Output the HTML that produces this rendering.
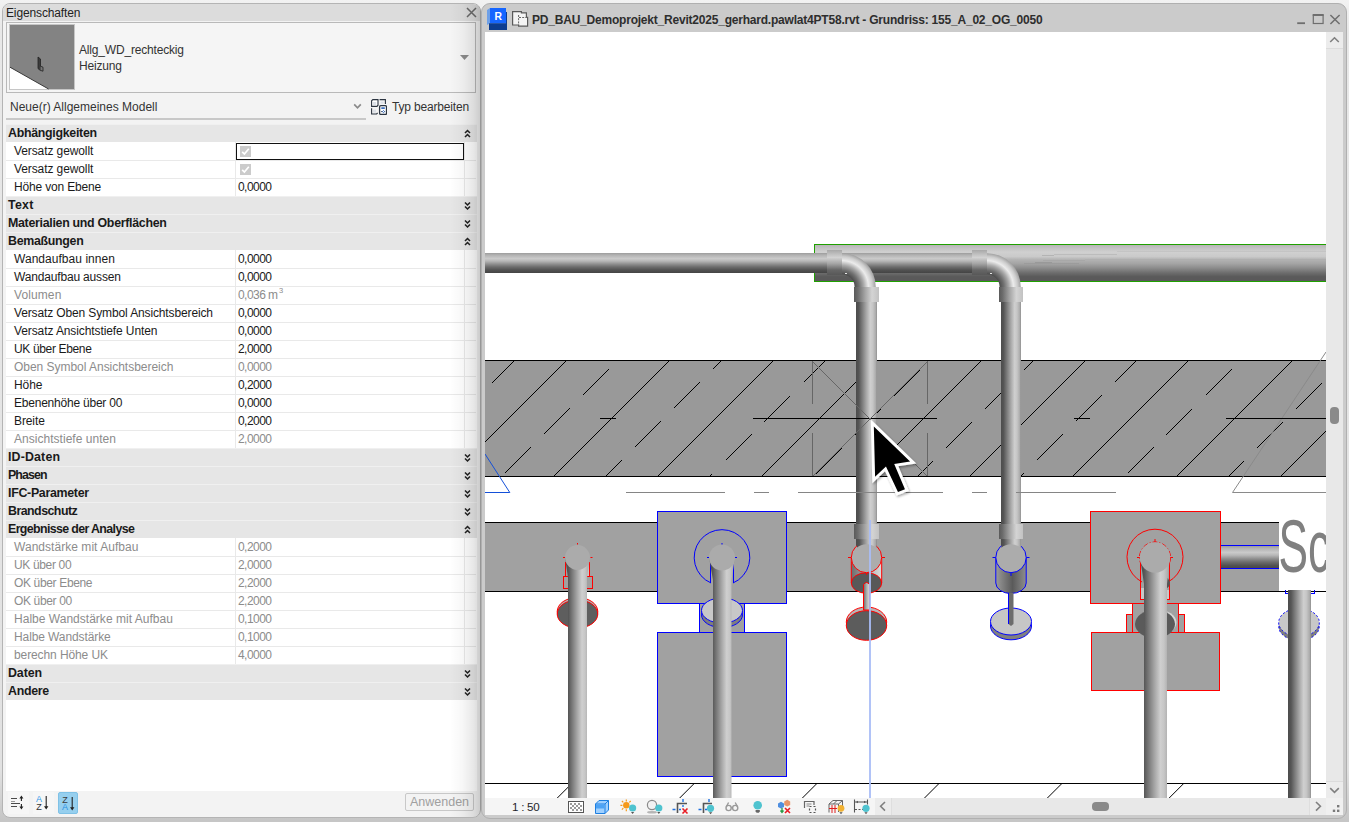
<!DOCTYPE html>
<html lang="de"><head><meta charset="utf-8"><title>Eigenschaften</title>
<style>
*{box-sizing:border-box;margin:0;padding:0}
html,body{width:1349px;height:822px;overflow:hidden}
body{position:relative;background:linear-gradient(#f2f2f2 0,#e8e8e8 30px,#e1e1e1 770px,#c6c6c6 819px);font-family:"Liberation Sans",sans-serif;font-size:12px;color:#1a1a1a}
.abs{position:absolute}
#lp{position:absolute;left:2px;top:3px;width:479px;height:815px;border:1px solid #b4b4b4;border-radius:8px;background:#f3f3f3;overflow:hidden}
#lp .tb{position:absolute;left:0;top:0;width:100%;height:17px;background:#dcdcdc}
#lp .shade{position:absolute;right:0;top:0;width:9px;height:100%;background:linear-gradient(90deg,rgba(0,0,0,0),rgba(0,0,0,.10) 60%,rgba(0,0,0,.22))}
#rp{position:absolute;left:481px;top:3px;width:866px;height:816px;border:1px solid #b0b0b0;border-radius:9px;background:#cbcbcb;overflow:hidden}
.hd{position:absolute;left:6px;width:471px;height:18px;background:#e6e6e6;border-top:1px solid #f0f0f0;font-weight:bold;font-size:12.4px;line-height:17px;letter-spacing:-0.3px}
.hd span{position:absolute;left:2px;top:0}
.hd .chev{position:absolute;left:458px;top:4px}
.rw{position:absolute;left:6px;width:470px;height:18px;background:#fff;border-top:1px solid #e9e9e9;line-height:17px}
.rw .l{position:absolute;left:8px;top:0;letter-spacing:-0.1px}
.rw .v{position:absolute;left:232px;top:0;letter-spacing:-0.55px}
.rw:before{content:"";position:absolute;left:229px;top:-1px;width:1px;height:18px;background:#e9e9e9}
.rw:after{content:"";position:absolute;left:458px;top:-1px;width:1px;height:18px;background:#e9e9e9}
.rw.dis{color:#8c8c8c}
.rw .cb{position:absolute;left:234px;top:3px}
.selbox{position:absolute;left:230px;top:0;width:228px;height:17px;border:1px solid #111;z-index:3}.hd+.rw{border-top-color:#fff}
sup{font-size:7.5px;line-height:0;vertical-align:baseline;position:relative;top:-6.5px;margin-left:1.5px}
</style></head><body>

<div id="lp"><div class="tb"></div></div>
<div class="abs" style="left:6px;top:6px;font-size:12px;line-height:15px;letter-spacing:-0.13px;color:#222">Eigenschaften</div>
<svg class="abs" style="left:466px;top:7px" width="11" height="11" viewBox="0 0 11 11"><path d="M1 1 L10 10 M10 1 L1 10" stroke="#6a6a6a" stroke-width="1.5" fill="none"/></svg>
<div class="abs" style="left:6px;top:22px;width:470px;height:71px;border:1px solid #b9b9b9;background:#f5f5f5"></div>
<svg class="abs" style="left:9px;top:24px" width="66" height="66" viewBox="9 24 66 66"><rect x="9" y="24" width="66" height="66" fill="#c6c6c6"/><rect x="10" y="25" width="64" height="64" fill="#fff"/><path d="M10 25 H74 V89 H48.6 L10 67.2 Z" fill="#838383"/><path d="M10 67.2 L48.6 89" stroke="#3a3a3a" stroke-width="1" fill="none"/><path d="M38 57 L40.5 59 V70.6 L38 68.6 Z" fill="#3c3c3c" stroke="#222" stroke-width=".8"/><path d="M40.5 66.2 L43 67.2 V71.2 L40.5 70.4" fill="#777" stroke="#222" stroke-width=".8"/></svg>
<div class="abs" style="left:79px;top:42px;font-size:12px;line-height:16px;color:#333;letter-spacing:-0.18px">Allg_WD_rechteckig<br>Heizung</div>
<svg class="abs" style="left:460px;top:55px" width="9" height="5" viewBox="0 0 9 5"><path d="M0 0 H9 L4.5 5 Z" fill="#8a8a8a"/></svg>
<div class="abs" style="left:10px;top:99px;font-size:12px;line-height:16px;color:#333">Neue(r) Allgemeines Modell</div>
<div class="abs" style="left:6px;top:118px;width:360px;height:2px;background:#c8c8c8"></div>
<svg class="abs" style="left:353px;top:103px" width="9" height="7" viewBox="0 0 9 7"><path d="M1.2 1.3 L4.5 4.8 L7.8 1.3" stroke="#8a8a8a" stroke-width="1.7" fill="none"/></svg>
<svg class="abs" style="left:371px;top:99px" width="16" height="16" viewBox="0 0 16 16"><g fill="none" stroke="#2b3440" stroke-width="1.1"><path d="M1.8 .6 H7 V6.2 L6 7.4 H.6 V1.8 Z" fill="#fff"/><path d="M8.6 .6 H14.4 V5"/><path d="M.6 9.2 V15 H5.6 L6.6 14"/><rect x="8.6" y="6.6" width="6.9" height="8.9" rx="1.2" fill="#fff" stroke-width="1.3"/></g><rect x="2" y="3" width="3.2" height="3" fill="#dde1e8"/><rect x="9.6" y="2.6" width="3" height="2" fill="#dde1e8"/><rect x="2" y="10.6" width="3" height="3" fill="#dde1e8"/><rect x="10.3" y="8.4" width="3.5" height="1.4" fill="#0f4fb0"/><path d="M10.2 12.6 H11.6 M13.3 12.6 H14" stroke="#2b3440" stroke-width="1"/><path d="M12.5 11.5 L13.6 12.6 L12.5 13.7 L11.4 12.6 Z" fill="#fff" stroke="#0f4fb0" stroke-width=".8"/></svg>
<div class="abs" style="left:392px;top:99px;font-size:12px;line-height:16px;color:#333;letter-spacing:-0.17px">Typ bearbeiten</div>
<div class="abs" style="left:6px;top:124px;width:471px;height:667px;background:#fff"></div>

<div class="hd" style="top:124px"><span>Abhängigkeiten</span><svg class="chev" width="7" height="10" viewBox="0 0 7 10"><path d="M1 4 L3.5 1.5 L6 4 M1 8 L3.5 5.5 L6 8" fill="none" stroke="#222" stroke-width="1.55"/></svg></div>
<div class="rw" style="top:142px"><span class="l">Versatz gewollt</span><div class="selbox"></div><svg class="cb" width="11" height="11" viewBox="0 0 11 11"><rect width="11" height="11" fill="#cbcbcb"/><path d="M2.2 5.8 L4.4 8 L8.8 2.8" fill="none" stroke="#fff" stroke-width="1.7"/></svg></div>
<div class="rw" style="top:160px"><span class="l">Versatz gewollt</span><svg class="cb" width="11" height="11" viewBox="0 0 11 11"><rect width="11" height="11" fill="#cbcbcb"/><path d="M2.2 5.8 L4.4 8 L8.8 2.8" fill="none" stroke="#fff" stroke-width="1.7"/></svg></div>
<div class="rw" style="top:178px"><span class="l" style="letter-spacing:-0.17px">Höhe von Ebene</span><span class="v">0,0000</span></div>
<div class="hd" style="top:196px"><span style="letter-spacing:0.25px">Text</span><svg class="chev" width="7" height="10" viewBox="0 0 7 10"><path d="M1 1.5 L3.5 4 L6 1.5 M1 5.5 L3.5 8 L6 5.5" fill="none" stroke="#222" stroke-width="1.55"/></svg></div>
<div class="hd" style="top:214px"><span>Materialien und Oberflächen</span><svg class="chev" width="7" height="10" viewBox="0 0 7 10"><path d="M1 1.5 L3.5 4 L6 1.5 M1 5.5 L3.5 8 L6 5.5" fill="none" stroke="#222" stroke-width="1.55"/></svg></div>
<div class="hd" style="top:232px"><span>Bemaßungen</span><svg class="chev" width="7" height="10" viewBox="0 0 7 10"><path d="M1 4 L3.5 1.5 L6 4 M1 8 L3.5 5.5 L6 8" fill="none" stroke="#222" stroke-width="1.55"/></svg></div>
<div class="rw" style="top:250px"><span class="l" style="letter-spacing:0.04px">Wandaufbau innen</span><span class="v">0,0000</span></div>
<div class="rw" style="top:268px"><span class="l" style="letter-spacing:-0.17px">Wandaufbau aussen</span><span class="v">0,0000</span></div>
<div class="rw dis" style="top:286px"><span class="l" style="letter-spacing:0.10px">Volumen</span><span class="v">0,036 m<sup>3</sup></span></div>
<div class="rw" style="top:304px"><span class="l" style="letter-spacing:-0.13px">Versatz Oben Symbol Ansichtsbereich</span><span class="v">0,0000</span></div>
<div class="rw" style="top:322px"><span class="l">Versatz Ansichtstiefe Unten</span><span class="v">0,0000</span></div>
<div class="rw" style="top:340px"><span class="l" style="letter-spacing:-0.35px">UK über Ebene</span><span class="v">2,0000</span></div>
<div class="rw dis" style="top:358px"><span class="l" style="letter-spacing:-0.03px">Oben Symbol Ansichtsbereich</span><span class="v">0,0000</span></div>
<div class="rw" style="top:376px"><span class="l">Höhe</span><span class="v">0,2000</span></div>
<div class="rw" style="top:394px"><span class="l" style="letter-spacing:-0.22px">Ebenenhöhe über 00</span><span class="v">0,0000</span></div>
<div class="rw" style="top:412px"><span class="l">Breite</span><span class="v">0,2000</span></div>
<div class="rw dis" style="top:430px"><span class="l" style="letter-spacing:0.03px">Ansichtstiefe unten</span><span class="v">2,0000</span></div>
<div class="hd" style="top:448px"><span style="letter-spacing:0.15px">ID-Daten</span><svg class="chev" width="7" height="10" viewBox="0 0 7 10"><path d="M1 1.5 L3.5 4 L6 1.5 M1 5.5 L3.5 8 L6 5.5" fill="none" stroke="#222" stroke-width="1.55"/></svg></div>
<div class="hd" style="top:466px"><span style="letter-spacing:-0.90px">Phasen</span><svg class="chev" width="7" height="10" viewBox="0 0 7 10"><path d="M1 1.5 L3.5 4 L6 1.5 M1 5.5 L3.5 8 L6 5.5" fill="none" stroke="#222" stroke-width="1.55"/></svg></div>
<div class="hd" style="top:484px"><span>IFC-Parameter</span><svg class="chev" width="7" height="10" viewBox="0 0 7 10"><path d="M1 1.5 L3.5 4 L6 1.5 M1 5.5 L3.5 8 L6 5.5" fill="none" stroke="#222" stroke-width="1.55"/></svg></div>
<div class="hd" style="top:502px"><span style="letter-spacing:-0.53px">Brandschutz</span><svg class="chev" width="7" height="10" viewBox="0 0 7 10"><path d="M1 1.5 L3.5 4 L6 1.5 M1 5.5 L3.5 8 L6 5.5" fill="none" stroke="#222" stroke-width="1.55"/></svg></div>
<div class="hd" style="top:520px"><span style="letter-spacing:-0.63px">Ergebnisse der Analyse</span><svg class="chev" width="7" height="10" viewBox="0 0 7 10"><path d="M1 4 L3.5 1.5 L6 4 M1 8 L3.5 5.5 L6 8" fill="none" stroke="#222" stroke-width="1.55"/></svg></div>
<div class="rw dis" style="top:538px"><span class="l" style="letter-spacing:0.04px">Wandstärke mit Aufbau</span><span class="v">0,2000</span></div>
<div class="rw dis" style="top:556px"><span class="l" style="letter-spacing:-0.35px">UK über 00</span><span class="v">2,0000</span></div>
<div class="rw dis" style="top:574px"><span class="l" style="letter-spacing:-0.35px">OK über Ebene</span><span class="v">2,2000</span></div>
<div class="rw dis" style="top:592px"><span class="l" style="letter-spacing:-0.36px">OK über 00</span><span class="v">2,2000</span></div>
<div class="rw dis" style="top:610px"><span class="l" style="letter-spacing:0.02px">Halbe Wandstärke mit Aufbau</span><span class="v">0,1000</span></div>
<div class="rw dis" style="top:628px"><span class="l">Halbe Wandstärke</span><span class="v">0,1000</span></div>
<div class="rw dis" style="top:646px"><span class="l">berechn Höhe UK</span><span class="v">4,0000</span></div>
<div class="hd" style="top:664px"><span style="letter-spacing:-0.10px">Daten</span><svg class="chev" width="7" height="10" viewBox="0 0 7 10"><path d="M1 1.5 L3.5 4 L6 1.5 M1 5.5 L3.5 8 L6 5.5" fill="none" stroke="#222" stroke-width="1.55"/></svg></div>
<div class="hd" style="top:682px"><span>Andere</span><svg class="chev" width="7" height="10" viewBox="0 0 7 10"><path d="M1 1.5 L3.5 4 L6 1.5 M1 5.5 L3.5 8 L6 5.5" fill="none" stroke="#222" stroke-width="1.55"/></svg></div>
<div class="abs" style="left:405px;top:793px;width:69px;height:18px;border:1px solid #c8c8c8;border-radius:2px;background:#f3f3f3;color:#a0a0a0;text-align:center;line-height:16px;font-size:12.5px">Anwenden</div>
<div class="abs" style="left:8px;top:792px;width:21px;height:22px;background:#f6f6f6"></div>
<div class="abs" style="left:33px;top:792px;width:21px;height:22px;background:#f6f6f6"></div>
<div class="abs" style="left:58px;top:792px;width:20px;height:22px;background:#96cfee;border:1px solid #7fc1e6;border-radius:2px"></div>
<svg class="abs" style="left:8px;top:792px" width="72" height="22" viewBox="8 792 72 22"><g stroke="#4a4a4a" stroke-width="1" fill="none" shape-rendering="crispEdges"><path d="M11 798.5 H17 M11 803.5 H19.5 M11 806.5 H17"/><path d="M11 801.5 H14.5" stroke="#999"/></g><g stroke="#222" stroke-width="1.1" fill="#222"><path d="M21.4 797 V801 M21.4 804 V808" fill="none"/><path d="M21.4 795.4 L23.4 798.4 H19.4 Z M21.4 809.6 L23.4 806.6 H19.4 Z" stroke="none"/><path d="M46.2 796 V807 M72.2 797 V808" fill="none"/><path d="M46.2 809.6 L48.4 806.2 H44 Z M72.2 810.6 L74.4 807.2 H70 Z" stroke="none"/></g>
<g font-family="Liberation Sans, sans-serif" font-size="9"><text x="36" y="802.3" fill="#2f97e8">A</text><text x="36.3" y="809.5" fill="#333">Z</text><text x="62.3" y="803" fill="#3a3a3a">Z</text><text x="62" y="810.4" fill="#2a8fe4">A</text></g></svg>
<div class="abs" style="left:450px;top:4px;width:31px;height:813px;border-radius:0 8px 8px 0;background:linear-gradient(90deg,rgba(0,0,0,0),rgba(0,0,0,.03) 40%,rgba(0,0,0,.09) 75%,rgba(0,0,0,.17))"></div>

<div id="rp"></div>
<div class="abs" style="left:485px;top:32px;width:841px;height:766px;background:#fff"></div>
<div class="abs" style="left:1326px;top:32px;width:17px;height:766px;background:#e8e8e8"></div>
<div class="abs" style="left:1326px;top:32px;width:17px;height:17px;background:#ececec;border-bottom:1px solid #dcdcdc"></div>
<div class="abs" style="left:1326px;top:781px;width:17px;height:17px;background:#ececec;border-top:1px solid #dcdcdc"></div>
<div class="abs" style="left:1330px;top:407px;width:9px;height:17px;border-radius:4px;background:#8a8a8a"></div>
<div class="abs" style="left:485px;top:798px;width:858px;height:17px;background:#f5f5f5"></div>
<div class="abs" style="left:875px;top:798px;width:451px;height:17px;background:#e8e8e8"></div>
<div class="abs" style="left:875px;top:798px;width:17px;height:17px;background:#ececec;border-right:1px solid #dedede"></div>
<div class="abs" style="left:1309px;top:798px;width:17px;height:17px;background:#ececec;border-left:1px solid #dedede"></div>
<div class="abs" style="left:1326px;top:798px;width:17px;height:17px;background:#f0f0f0"></div>
<div class="abs" style="left:1092px;top:802px;width:17px;height:9px;border-radius:4px;background:#8a8a8a"></div>
<svg class="abs" style="left:875px;top:781px" width="468" height="34" viewBox="875 781 468 34"><g fill="none" stroke="#808080" stroke-width="1.6"><path d="M885 802 L880.6 806.3 L885 810.6"/><path d="M1316 802 L1320.4 806.3 L1316 810.6"/><path d="M1330.2 788.2 L1334.5 792.3 L1338.8 788.2"/></g><g fill="#7a7a7a"><rect x="1337" y="805" width="2.4" height="2.4"/><rect x="1332.8" y="809.6" width="2.4" height="2.4"/><rect x="1337" y="809.6" width="2.4" height="2.4"/></g></svg>
<svg class="abs" style="left:1326px;top:32px" width="17" height="17" viewBox="0 0 17 17"><path d="M4.2 10 L8.5 5.8 L12.8 10" fill="none" stroke="#808080" stroke-width="1.6"/></svg>
<svg class="abs" style="left:486px;top:7px" width="44" height="24" viewBox="486 7 44 24"><path d="M487 10 L490 8 V23.2 L487 25 Z" fill="#6ea0e8"/><rect x="490" y="8" width="16" height="15.4" fill="#1666ff"/><path d="M489 23.2 H506 V12 H507 V30 H489 Z" fill="#0c3c90"/><text x="494.6" y="20" font-family="Liberation Sans, sans-serif" font-weight="bold" font-size="10.4" fill="#fff">R</text>
<g fill="#f4f4f4" stroke="#5a5a5a" stroke-width="1.2"><path d="M512.6 11.6 H521.4 V12.8 H526.4 V17.4 H527.6 V26.2 H518.6 V25 H512.6 Z"/></g><path d="M518.6 15 V25 M519 17.5 H527" stroke="#666" stroke-width="1" stroke-dasharray="2 1.2" fill="none"/></svg>
<div class="abs" style="left:532px;top:13px;font-size:12px;font-weight:bold;line-height:15px;color:#2e2e2e;letter-spacing:-0.21px;white-space:nowrap">PD_BAU_Demoprojekt_Revit2025_gerhard.pawlat4PT58.rvt - Grundriss: 155_A_02_OG_0050</div>
<svg class="abs" style="left:1295px;top:12px" width="48" height="14" viewBox="1295 12 48 14"><g fill="none" stroke="#6e6e6e"><path d="M1297.2 23.2 H1305" stroke-width="1.8"/><rect x="1313.3" y="15.3" width="9.8" height="8.2" stroke-width="1.2"/><path d="M1312.7 14.9 H1323.7" stroke-width="1.8"/><path d="M1330.4 15 L1339.6 24 M1339.6 15 L1330.4 24" stroke-width="1.5"/></g></svg>

<svg class="abs" style="left:485px;top:32px" width="841" height="766" viewBox="485 32 841 766">
<defs>
<linearGradient id="vp" x1="0" y1="0" x2="1" y2="0"><stop offset="0" stop-color="#4c4c4c"/><stop offset=".13" stop-color="#555"/><stop offset=".3" stop-color="#7c7c7c"/><stop offset=".5" stop-color="#a9a9a9"/><stop offset=".68" stop-color="#cfcfcf"/><stop offset=".8" stop-color="#c6c6c6"/><stop offset=".95" stop-color="#a9a9a9"/><stop offset="1" stop-color="#8c8c8c"/></linearGradient>
<linearGradient id="vc" x1="0" y1="0" x2="1" y2="0"><stop offset="0" stop-color="#5a5a5a"/><stop offset=".15" stop-color="#6c6c6c"/><stop offset=".45" stop-color="#a6a6a6"/><stop offset=".72" stop-color="#d4d4d4"/><stop offset="1" stop-color="#c2c2c2"/></linearGradient>
<linearGradient id="hp" x1="0" y1="0" x2="0" y2="1"><stop offset="0" stop-color="#9c9c9c"/><stop offset=".1" stop-color="#b2b2b2"/><stop offset=".28" stop-color="#cacaca"/><stop offset=".4" stop-color="#b8b8b8"/><stop offset=".55" stop-color="#909090"/><stop offset=".7" stop-color="#6c6c6c"/><stop offset=".85" stop-color="#525252"/><stop offset="1" stop-color="#444"/></linearGradient>
<linearGradient id="hc" x1="0" y1="0" x2="0" y2="1"><stop offset="0" stop-color="#a8a8a8"/><stop offset=".3" stop-color="#d2d2d2"/><stop offset=".55" stop-color="#a4a4a4"/><stop offset=".8" stop-color="#666"/><stop offset="1" stop-color="#585858"/></linearGradient>
<linearGradient id="bp" x1="0" y1="0" x2="0" y2="1"><stop offset="0" stop-color="#b8b4b8"/><stop offset=".08" stop-color="#c2c2c2"/><stop offset=".2" stop-color="#d0d0d0"/><stop offset=".32" stop-color="#cacaca"/><stop offset=".4" stop-color="#b4b4b4"/><stop offset=".52" stop-color="#a4a4a4"/><stop offset=".64" stop-color="#8c8c8c"/><stop offset=".76" stop-color="#707070"/><stop offset=".88" stop-color="#5a5a5a"/><stop offset="1" stop-color="#5a585a"/></linearGradient>
<radialGradient id="el1" gradientUnits="userSpaceOnUse" cx="842" cy="287" r="33.8"><stop offset=".38" stop-color="#4e4e4e"/><stop offset=".5" stop-color="#707070"/><stop offset=".64" stop-color="#a8a8a8"/><stop offset=".78" stop-color="#ececec"/><stop offset=".9" stop-color="#cccccc"/><stop offset="1" stop-color="#a0a0a0"/></radialGradient>
<radialGradient id="el2" gradientUnits="userSpaceOnUse" cx="987" cy="287" r="33.8"><stop offset=".38" stop-color="#4e4e4e"/><stop offset=".5" stop-color="#707070"/><stop offset=".64" stop-color="#a8a8a8"/><stop offset=".78" stop-color="#ececec"/><stop offset=".9" stop-color="#cccccc"/><stop offset="1" stop-color="#a0a0a0"/></radialGradient>
<clipPath id="wallclip"><rect x="485" y="361" width="841" height="115"/></clipPath>
</defs>
<g shape-rendering="crispEdges">
<rect x="815" y="245" width="511" height="36" fill="url(#bp)"/>
<path d="M1326 244.5 H814.5 V281.5 H1326" fill="none" stroke="#1fa000" stroke-width="1"/>
<rect x="1042" y="255" width="12" height="1" fill="#b4b4b4"/>
<rect x="1043" y="260" width="42" height="1" fill="#a8a8a8"/>
<rect x="1035" y="262" width="17" height="1" fill="#999"/>
<rect x="1024" y="263" width="55" height="1" fill="#9c9c9c"/>
<rect x="1054" y="254" width="63" height="1" fill="#bcbcbc"/>
<rect x="1117" y="251" width="209" height="1" fill="#c4c4c4"/>
<rect x="1085" y="259" width="241" height="1" fill="#b0b0b0"/>
<rect x="485" y="253" width="502" height="20" fill="url(#hp)"/>
</g>
<g shape-rendering="crispEdges"><rect x="485" y="360" width="841" height="117" fill="#999"/></g>
<g clip-path="url(#wallclip)" stroke="#000" stroke-width="1" fill="none" shape-rendering="crispEdges">
<path d="M239.0 480 L363.0 356 M343.0 480 L467.0 356 M447.0 480 L571.0 356 M550.0 480 L674.0 356 M654.0 480 L778.0 356 M758.0 480 L882.0 356 M862.0 480 L986.0 356 M966.0 480 L1090.0 356 M1069.0 480 L1193.0 356 M1173.0 480 L1297.0 356 M1277.0 480 L1401.0 356"/>
<path d="M194.0 473.0 L220.0 447.0 M233.0 434.0 L259.0 408.0 M272.0 395.0 L298.0 369.0 M311.0 356.0 L337.0 330.0 M284.0 487.0 L310.0 461.0 M324.0 447.0 L350.0 421.0 M362.0 409.0 L388.0 383.0 M402.0 369.0 L428.0 343.0 M375.0 500.0 L401.0 474.0 M414.0 461.0 L440.0 435.0 M453.0 422.0 L479.0 396.0 M492.0 383.0 L518.0 357.0 M505.0 473.0 L531.0 447.0 M544.0 434.0 L570.0 408.0 M583.0 395.0 L609.0 369.0 M622.0 356.0 L648.0 330.0 M596.0 486.0 L622.0 460.0 M635.0 447.0 L661.0 421.0 M674.0 408.0 L700.0 382.0 M713.0 369.0 L739.0 343.0 M686.0 500.0 L712.0 474.0 M726.0 460.0 L752.0 434.0 M764.0 422.0 L790.0 396.0 M804.0 382.0 L830.0 356.0 M816.0 474.0 L842.0 448.0 M855.0 435.0 L881.0 409.0 M894.0 396.0 L920.0 370.0 M933.0 357.0 L959.0 331.0 M907.0 487.0 L933.0 461.0 M946.0 448.0 L972.0 422.0 M985.0 409.0 L1011.0 383.0 M1024.0 370.0 L1050.0 344.0 M998.0 499.0 L1024.0 473.0 M1037.0 460.0 L1063.0 434.0 M1076.0 421.0 L1102.0 395.0 M1115.0 382.0 L1141.0 356.0 M1128.0 473.0 L1154.0 447.0 M1166.0 435.0 L1192.0 409.0 M1206.0 395.0 L1232.0 369.0 M1244.0 357.0 L1270.0 331.0 M1218.0 487.0 L1244.0 461.0 M1257.0 448.0 L1283.0 422.0 M1296.0 409.0 L1322.0 383.0 M1335.0 370.0 L1361.0 344.0 M1309.0 500.0 L1335.0 474.0 M1348.0 461.0 L1374.0 435.0 M1387.0 422.0 L1413.0 396.0 M1426.0 383.0 L1452.0 357.0 M1439.0 474.0 L1465.0 448.0 M1478.0 435.0 L1504.0 409.0 M1517.0 396.0 L1543.0 370.0 M1556.0 357.0 L1582.0 331.0 M1530.0 486.0 L1556.0 460.0 M1568.0 448.0 L1594.0 422.0 M1608.0 408.0 L1634.0 382.0 M1646.0 370.0 L1672.0 344.0 M1620.0 500.0 L1646.0 474.0 M1659.0 461.0 L1685.0 435.0 M1698.0 422.0 L1724.0 396.0 M1737.0 383.0 L1763.0 357.0"/>
</g>
<g shape-rendering="crispEdges" fill="#000">
<rect x="485" y="360" width="841" height="1"/><rect x="485" y="476" width="841" height="1"/>
</g>
<path d="M1326 352 L1232.5 492.5 H1326" fill="none" stroke="#8a8a8a" stroke-width="1"/>
<path d="M485 454 L509.8 492.5 H485" fill="none" stroke="#1450d8" stroke-width="1"/>
<g shape-rendering="crispEdges"><rect x="485" y="522" width="794" height="70" fill="#a1a1a1"/><rect x="485" y="522" width="794" height="1" fill="#000"/><rect x="485" y="591" width="841" height="1" fill="#000"/></g>
<rect x="485" y="783" width="841" height="1" fill="#000" shape-rendering="crispEdges"/>
<path d="M571.8 783.5 l-15 15 M694.2 783.5 l-15 15 M816.9 783.5 l-15 15 M939.0 783.5 l-15 15 M1061.9 783.5 l-15 15 M1183.7 783.5 l-15 15 M1306.0 783.5 l-15 15" stroke="#000" stroke-width="1" fill="none"/>
<g shape-rendering="crispEdges" fill="#a1a1a1" stroke="#0000ff" stroke-width="1">
<rect x="699.5" y="603.5" width="45" height="29" />
<rect x="657.5" y="511.5" width="129" height="92"/>
<rect x="657.5" y="632.5" width="129" height="144"/>
</g>
<ellipse cx="722" cy="614.8" rx="20.5" ry="12.8" fill="#7e7e7e" stroke="#0000ff" stroke-width="1"/>
<ellipse cx="722" cy="610.5" rx="20.5" ry="12.6" fill="#c8c8c8" stroke="#0000ff" stroke-width="1"/>
<path d="M711 583 A27.8 27.8 0 1 1 733 583" fill="none" stroke="#0000ff" stroke-width="1"/>
<path d="M710.5 563 V583 M733.5 563 V583 M722 543 v2 M707 557.5 h3 M734 557.5 h3" fill="none" stroke="#0000ff" stroke-width="1"/>
<g shape-rendering="crispEdges" fill="#a1a1a1" stroke="#ff0000" stroke-width="1">
<rect x="1126.5" y="614.5" width="58" height="18"/>
<rect x="1132.5" y="603.5" width="46" height="29"/>
<rect x="1090.5" y="511.5" width="130" height="92"/>
<rect x="1091.5" y="632.5" width="128" height="58"/>
</g>
<ellipse cx="1157" cy="622.5" rx="19.5" ry="13" fill="#d4d4d4"/>
<ellipse cx="1155" cy="624" rx="20" ry="14" fill="#5a5a5a"/>
<path d="M1142 582 A28 28 0 1 1 1168 582" fill="none" stroke="#ff0000" stroke-width="1"/>
<circle cx="1155" cy="557.5" r="15.5" fill="none" stroke="#ff0000" stroke-width="1" stroke-dasharray="5 2 1 2"/>
<path d="M1155 539 v3 M1137 557.5 h3 M1170 557.5 h3" stroke="#ff0000" stroke-width="1" fill="none"/>
<rect x="1140.5" y="562.5" width="29" height="37" fill="none" stroke="#ff0000" stroke-width="1" shape-rendering="crispEdges"/>
<path d="M1155 574.5 A15 8.5 0 0 1 1155 591.5 Z" fill="#555"/>
<rect x="1166.5" y="590" width="2.5" height="9" fill="#c8c8c8"/><rect x="1141" y="588" width="3" height="11" fill="#c8c8c8"/>
<rect x="1221" y="546" width="58" height="23" fill="url(#hp)" shape-rendering="crispEdges"/>
<path d="M1221 545.5 H1279 M1221 568.5 H1279" stroke="#0000ff" stroke-width="1" shape-rendering="crispEdges"/>
<g shape-rendering="crispEdges" fill="none" stroke="#ff0000" stroke-width="1"><rect x="565.5" y="562.5" width="24" height="14"/><rect x="563.5" y="576.5" width="29" height="12"/></g>
<rect x="587" y="563" width="2" height="13" fill="#c8c8c8"/>
<path d="M577.5 543 v1.5 M563 557.5 h2 M590.5 557.5 h2" stroke="#ff0000" stroke-width="1"/>
<ellipse cx="577.5" cy="611.5" rx="20.3" ry="14" fill="#b4b4b4" stroke="#ff0000" stroke-width="1"/>
<ellipse cx="577.5" cy="614" rx="20.3" ry="14" fill="#5e5e5e" stroke="#ff0000" stroke-width="1"/>
<ellipse cx="1299" cy="626.5" rx="20.3" ry="14" fill="#7e7e7e" stroke="#0000ff" stroke-width="1" stroke-dasharray="2 2"/>
<ellipse cx="1299" cy="622.5" rx="20.3" ry="14" fill="#c8c8c8" stroke="#0000ff" stroke-width="1" stroke-dasharray="2 2"/>
<path d="M565 557 L568 578 V798 H587 V578 L590 557 Z" fill="url(#vp)"/>
<circle cx="577.5" cy="557.5" r="12.5" fill="#ababab"/>
<path d="M709 557 L713 580 V798 H731.5 V580 L735 557 Z" fill="url(#vp)"/>
<circle cx="722" cy="557.5" r="13" fill="#ababab"/>
<path d="M1140 557 L1144 584 V798 H1167 V584 L1170 557 Z" fill="url(#vp)"/>
<circle cx="1155" cy="557.5" r="15.2" fill="#ababab"/>
<rect x="1288" y="589" width="23" height="209" fill="url(#vp)" shape-rendering="crispEdges"/>
<path d="M1285.5 589 V593.5 H1288 M1311 593.5 H1314.5 V589" fill="none" stroke="#0000ff" stroke-width="1" shape-rendering="crispEdges"/>
<rect x="856" y="287" width="21" height="259" fill="url(#vp)" shape-rendering="crispEdges"/>
<path d="M842 253.2 A33.8 33.8 0 0 1 875.8 287 H854.6 A12.6 12.6 0 0 0 842 274.4 Z" fill="url(#el1)"/>
<rect x="827" y="250" width="15" height="25" fill="url(#hc)" shape-rendering="crispEdges"/>
<rect x="854" y="287" width="25" height="15" fill="url(#vc)" shape-rendering="crispEdges"/>
<rect x="854" y="524" width="25" height="15" fill="url(#vc)" shape-rendering="crispEdges"/>
<rect x="1001" y="287" width="20" height="259" fill="url(#vp)" shape-rendering="crispEdges"/>
<path d="M987 253.2 A33.8 33.8 0 0 1 1020.8 287 H999.6 A12.6 12.6 0 0 0 987 274.4 Z" fill="url(#el2)"/>
<rect x="972" y="250" width="15" height="25" fill="url(#hc)" shape-rendering="crispEdges"/>
<rect x="999" y="287" width="24" height="15" fill="url(#vc)" shape-rendering="crispEdges"/>
<rect x="999" y="524" width="24" height="15" fill="url(#vc)" shape-rendering="crispEdges"/>
<rect x="845" y="273" width="2" height="1" fill="#e8e8e8"/><rect x="990" y="273" width="2" height="1" fill="#e8e8e8"/>
<linearGradient id="rb" x1="0" y1="0" x2="1" y2="0"><stop offset="0" stop-color="#6c6c6c"/><stop offset=".5" stop-color="#aaa"/><stop offset="1" stop-color="#dcdcdc"/></linearGradient>
<rect x="851.3" y="557.5" width="30.4" height="25" fill="url(#rb)"/>
<ellipse cx="866.5" cy="583" rx="15.2" ry="10.3" fill="#585858" stroke="#ff0000" stroke-width="1"/>
<path d="M851.3 557.5 V583 M881.7 557.5 V583 M848.0 557.5 h3 M882.0 557.5 h3 M866.5 572 v3" stroke="#ff0000" stroke-width="1" fill="none"/>
<circle cx="866.5" cy="557.5" r="15.2" fill="#acacac" stroke="#ff0000" stroke-width="1"/>
<rect x="857" y="540" width="19.5" height="8" fill="url(#vp)"/>
<path d="M856.5 548 A15.2 15.2 0 0 1 876.5 548 Z" fill="#acacac"/>
<ellipse cx="866.5" cy="622" rx="20.2" ry="15" fill="#b6b6b6" stroke="#ff0000" stroke-width="1"/>
<ellipse cx="866.5" cy="625.5" rx="20.2" ry="14.8" fill="#5c5c5c" stroke="#ff0000" stroke-width="1"/>
<path d="M863.5 610 V584.5 Q866.5 580.5 869.5 584.5 V610 Z" fill="url(#rb)" stroke="#ff0000" stroke-width="1"/>
<linearGradient id="bb" x1="0" y1="0" x2="1" y2="0"><stop offset="0" stop-color="#9c9c9c"/><stop offset=".2" stop-color="#838383"/><stop offset=".55" stop-color="#5a5a5a"/><stop offset="1" stop-color="#8e8e8e"/></linearGradient>
<path d="M995.8 557.5 V583 A15.2 10.5 0 0 0 1026.2 583 V557.5 Z" fill="url(#bb)" stroke="#0000ff" stroke-width="1"/>
<circle cx="1011" cy="557.5" r="15.2" fill="#acacac" stroke="#0000ff" stroke-width="1"/>
<path d="M992.5 557.5 h3 M1026.5 557.5 h3 M1011 573 v3" stroke="#0000ff" stroke-width="1" fill="none"/>
<rect x="1001.5" y="540" width="19.5" height="8" fill="url(#vp)"/>
<path d="M1001 548 A15.2 15.2 0 0 1 1021 548 Z" fill="#acacac"/>
<ellipse cx="1011" cy="626" rx="20.5" ry="13.8" fill="#808080" stroke="#0000ff" stroke-width="1"/>
<ellipse cx="1011" cy="621.5" rx="20.5" ry="13.5" fill="#c6c6c6" stroke="#0000ff" stroke-width="1"/>
<path d="M1008.5 593 V624 L1011 626 L1013.5 624 V593 Z" fill="#6c6c6c"/><path d="M1008.5 593 V624" stroke="#0000ff" stroke-width="1"/>
<g shape-rendering="crispEdges" fill="#000">
<rect x="600" y="418" width="16" height="1"/>
<rect x="753" y="418" width="184" height="1"/>
<rect x="1074" y="418" width="16" height="1"/>
<rect x="1226" y="418" width="100" height="1"/>
</g>
<g stroke="#666" stroke-width="1" fill="none" shape-rendering="crispEdges"><path d="M812.5 361 V404 M812.5 433 V476 M927.5 361 V404 M927.5 433 V476"/><path d="M812 361 L927 476 M928 361 L813 476"/></g>
<g shape-rendering="crispEdges" fill="#858585">
<rect x="626" y="492" width="99" height="1"/>
<rect x="754" y="492" width="15" height="1"/>
<rect x="798" y="492" width="145" height="1"/>
<rect x="972" y="492" width="15" height="1"/>
<rect x="1016" y="492" width="100" height="1"/>
</g>
<rect x="869" y="520" width="2" height="278" fill="#a8bcf6" opacity=".9"/>
<rect x="1279" y="505" width="47" height="85" fill="#fff" shape-rendering="crispEdges"/>
<text x="0" y="0" transform="translate(1278.5 572.4) scale(.59 1)" font-family="Liberation Sans, sans-serif" font-size="75" fill="#808080">Sc</text>
<filter id="csh" x="-20%" y="-20%" width="150%" height="150%"><feDropShadow dx="1" dy="1.5" stdDeviation="1.2" flood-color="#000" flood-opacity=".35"/></filter>
<path transform="translate(870.7 419.5) scale(1.045) translate(-870.7 -419.5)" d="M873.7 426.1 L874.9 474.2 L885.3 464.4 L896.8 488.8 L903.5 486.3 L893.2 462 L908.4 459.6 Z" fill="#000" stroke="#fff" stroke-width="5.6" stroke-linejoin="miter" stroke-miterlimit="10" paint-order="stroke" filter="url(#csh)"/>
</svg>
<div class="abs" style="left:512px;top:800px;font-size:11.6px;line-height:14px;color:#1e1e2a;white-space:pre;letter-spacing:-.25px">1 : 50</div>
<svg class="abs" style="left:566px;top:798px" width="308" height="17" viewBox="566 798 308 17">
<!-- detail level -->
<rect x="568.5" y="801.5" width="15" height="11" fill="#fff" stroke="#555" stroke-width="1"/><path d="M570 803h2v2h-2zM574 803h2v2h-2zM578 803h2v2h-2zM572 805h2v2h-2zM576 805h2v2h-2zM580 805h2v2h-2zM570 807h2v2h-2zM574 807h2v2h-2zM578 807h2v2h-2zM572 809h2v2h-2zM576 809h2v2h-2zM580 809h2v2h-2z" fill="#9a9a9a"/>
<!-- cube -->
<path d="M595.5 804 L599 800.5 H608.5 V810 L605 813.5 H595.5 Z" fill="#9fd0ff" stroke="#1e7fe0" stroke-width="1"/><path d="M595.5 804 H605 V813.5 M605 804 L608.5 800.5" fill="none" stroke="#1e7fe0" stroke-width="1"/><rect x="596" y="804.5" width="8.5" height="4" fill="#4da3f5"/>
<!-- sun -->
<g stroke="#f59a1a" stroke-width="1.2"><path d="M626.3 799.4v2M626.3 809.2v2M620.4 805.3h2M621.9 801l1.4 1.4M630.7 801l-1.4 1.4M621.9 809.6l1.4-1.4"/></g><circle cx="626.3" cy="805.3" r="3.2" fill="#f59a1a"/><circle cx="632.6" cy="808" r="3.6" fill="#4fc3cf"/><path d="M631 812 h3.2 l-1.6 2 z" fill="#555"/>
<!-- shadows -->
<circle cx="652" cy="805" r="4.6" fill="#f2f2f2" stroke="#8a8a8a" stroke-width="1.2"/><ellipse cx="652" cy="812.3" rx="5" ry="1.2" fill="#b5b5b5"/><circle cx="658.8" cy="808" r="3.6" fill="#4fc3cf"/><path d="M657.2 812 h3.2 l-1.6 2 z" fill="#555"/>
<!-- crop x -->
<path d="M677.5 813 V803.5 H687" fill="none" stroke="#555" stroke-width="1.6"/><path d="M683 799v3M683 805v2M672.5 809.5h3M679 809.5h2" stroke="#1e6fe0" stroke-width="1.4"/><path d="M682.5 808.5l5 5M687.5 808.5l-5 5" stroke="#e81c24" stroke-width="1.6"/>
<!-- crop bulb -->
<path d="M703.5 813 V803.5 H712" fill="none" stroke="#555" stroke-width="1.6"/><path d="M709 799v3M698.5 809.5h3M705 809.5h2" stroke="#1e6fe0" stroke-width="1.4"/><circle cx="710.5" cy="808.3" r="3.6" fill="#4fc3cf"/><path d="M709 812.3 h3.2 l-1.6 2 z" fill="#555"/>
<!-- glasses -->
<g fill="none" stroke="#9a9a9a" stroke-width="1.4"><circle cx="728.6" cy="808" r="2.6"/><circle cx="735.2" cy="808" r="2.6"/><path d="M726.4 806.5 L728.6 802.5 M737.4 806.5 L735.2 802.5 M731.2 807.6 h1.4"/></g>
<!-- bulb -->
<circle cx="757.7" cy="805.2" r="4.3" fill="#4fc3cf"/><path d="M755.6 810 h4.2 v1.4 l-1 1.4 h-2.2 l-1 -1.4 z" fill="#666"/>
<!-- cubes x -->
<path d="M778 803.5 l3-1.7 3 1.7 v3.4 l-3 1.7 -3-1.7z" fill="#4f8fe0"/><path d="M784.2 801.5 l3-1.7 3 1.7 v3.4 l-3 1.7 -3-1.7z" fill="#e8956a"/><path d="M782 808 v4 M780.5 810.5 l1.5 2 1.5-2" stroke="#2a9a44" stroke-width="1.3" fill="none"/><path d="M785 808l5 5M790 808l-5 5" stroke="#e81c24" stroke-width="1.6"/>
<!-- temp crop -->
<path d="M804.5 808 V801.5 H814 V805" fill="none" stroke="#666" stroke-width="1.2"/><path d="M806.5 804 h5 M806.5 806 h3" stroke="#888" stroke-width="1"/><rect x="809.5" y="806.5" width="6" height="6" fill="none" stroke="#555" stroke-width="1.2" stroke-dasharray="2 2"/>
<!-- grid bulb -->
<path d="M829 812.5 V804 L833 800.5 H842.5 V806 M829 804 H838.5 L842.5 800.5 M833.5 804 L837 800.5 M838.5 804 V812" fill="none" stroke="#666" stroke-width="1"/><path d="M829 808.5 h8 M832 805 v8 M835 805 v8" stroke="#e02020" stroke-width="1"/><circle cx="841" cy="808.3" r="3.4" fill="#f2b233"/><path d="M839.4 812.2 h3.2 l-1.6 2 z" fill="#555"/>
<!-- dimension bulb -->
<path d="M854.5 799.5 v13 M867.5 799.5 v5 M854.5 802 H867.5" fill="none" stroke="#555" stroke-width="1.1"/><path d="M856 802 l2-1.3v2.6z M866 802 l-2-1.3v2.6z" fill="#555"/><path d="M855 809.5 h8" stroke="#555" stroke-width="1.1" stroke-dasharray="2 1.5"/><circle cx="866" cy="808.3" r="3.6" fill="#4fc3cf"/><path d="M864.4 812.3 h3.2 l-1.6 2 z" fill="#555"/>
</svg>

</body></html>
